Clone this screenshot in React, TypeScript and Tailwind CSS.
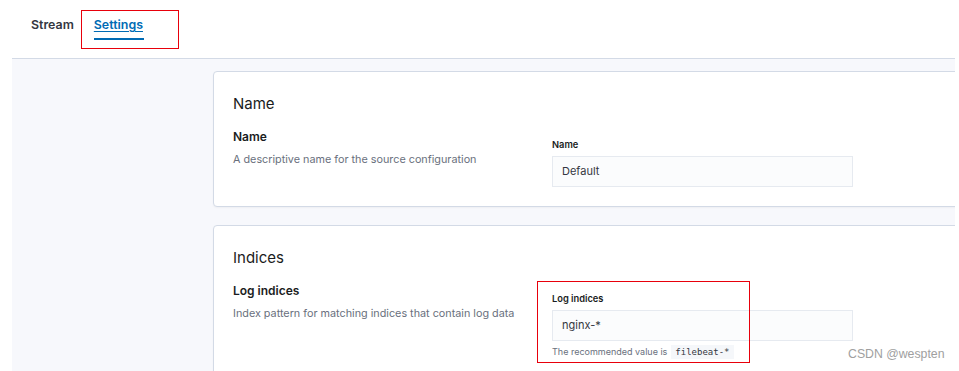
export default function App() {
    return (
        <div className="relative w-[959px] h-[371px] overflow-hidden bg-white font-['Inter','Noto_Sans',sans-serif] text-[#343741]">
            {/* Tabs */}
            <div className="h-[58px] flex items-start gap-[20px] pl-[31px] pt-[16px]">
                <div className="text-[12.4px] font-semibold leading-[18px] text-[#343741]">Stream</div>
                <div className="flex flex-col">
                    <span className="text-[12.4px] font-semibold leading-[18px] text-[#006bb4] underline underline-offset-2">Settings</span>
                    <span className="mt-[4px] h-[2px] w-[50px] bg-[#006bb4]"></span>
                </div>
            </div>

            {/* Page body */}
            <div className="ml-[12px] w-[943px] h-[313px] bg-[#f7f8fc] border-t border-[#d3dae6] overflow-hidden pl-[201px] pt-[12px]">
                <div className="w-[800px] flex flex-col gap-[18px]">
                    <Panel
                        heading="Name"
                        title="Name"
                        desc="A descriptive name for the source configuration"
                        label="Name"
                        value="Default"
                    />
                    <Panel
                        heading="Indices"
                        title="Log indices"
                        desc="Index pattern for matching indices that contain log data"
                        label="Log indices"
                        value="nginx-*"
                        help
                    />
                </div>
            </div>

            {/* Annotation boxes */}
            <div className="absolute left-[81px] top-[10px] w-[98px] h-[39px] border border-[#e8000b]"></div>
            <div className="absolute left-[537px] top-[281px] w-[213px] h-[82px] border border-[#e8000b]"></div>

            <div className="absolute left-[848px] top-[346px] text-[12.3px] leading-[16px] text-[#a0a0a0] font-['Liberation_Sans',sans-serif]">
                CSDN @wespten
            </div>
        </div>
    );
}

function Panel({
    heading,
    title,
    desc,
    label,
    value,
    help,
}: {
    heading: string;
    title: string;
    desc: string;
    label: string;
    value: string;
    help?: boolean;
}) {
    return (
        <div className="bg-white border border-[#d3dae6] rounded-[4px] shadow-[0_1px_2px_rgba(0,0,0,0.04)] pt-[22px] pb-[19px] pl-[19px]">
            <h2 className="text-[15px] leading-[20px] font-normal text-[#1a1c21]">{heading}</h2>
            <div className="mt-[14px] flex">
                <div className="w-[319px]">
                    <div className="text-[12px] leading-[18px] font-semibold text-[#1a1c21]">{title}</div>
                    <div className="mt-[6px] text-[10.8px] leading-[16px] text-[#69707d]">{desc}</div>
                </div>
                <div className="pt-[10px] w-[301px]">
                    <div className="text-[9.3px] leading-[14px] font-semibold text-[#1a1c21]">{label}</div>
                    <div className="mt-[4px] h-[31px] bg-[#fbfcfd] border border-[#e6eaf0] flex items-center pl-[9px] text-[11px] text-[#343741]">
                        {value}
                    </div>
                    {help && (
                        <div className="mt-[4px] flex items-center text-[9px] leading-[14px] text-[#69707d]">
                            The recommended value is
                            <code className="ml-[4px] px-[4px] bg-[#f5f7fa] text-[9px] font-medium text-[#343741] font-['DejaVu_Sans_Mono',monospace]">
                                filebeat-*
                            </code>
                        </div>
                    )}
                </div>
            </div>
        </div>
    );
}
